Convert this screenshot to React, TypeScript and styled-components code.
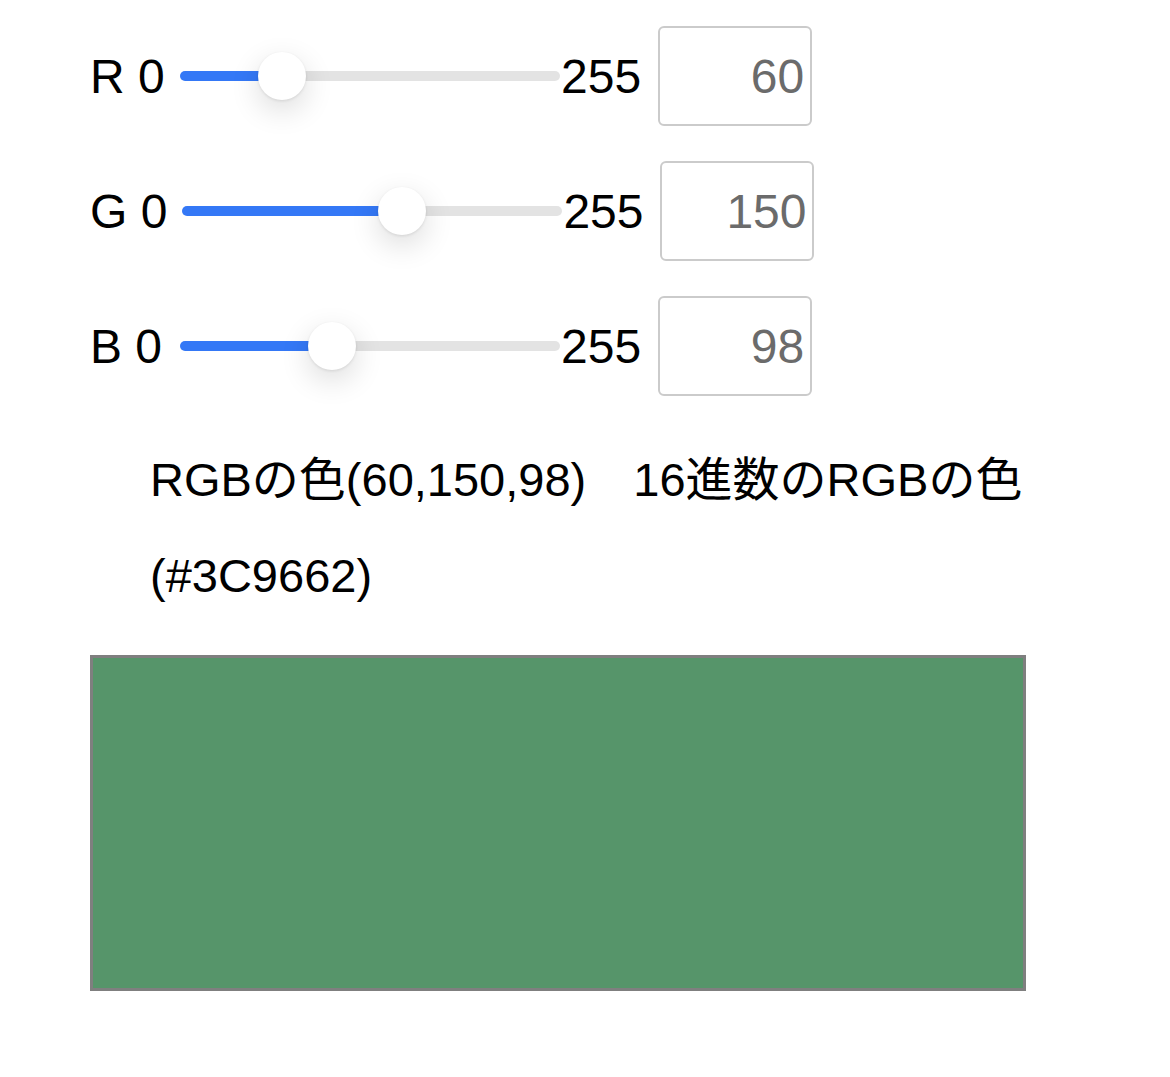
import React, { useState } from "react";
import styled, { createGlobalStyle } from "styled-components";

const GlobalStyle = createGlobalStyle`
  html, body { margin: 0; padding: 0; background: #ffffff; }
  body {
    font-family: "Liberation Sans", "Noto Sans CJK JP", Arial, sans-serif;
    color: #000000;
  }
`;

const Page = styled.div`
  display: flex;
  flex-direction: column;
  padding: 26px 0 0 90px;
  font-size: 48px;
`;

const Sliders = styled.div`
  display: flex;
  flex-direction: column;
  gap: 35px;
`;

const Row = styled.div`
  display: flex;
  align-items: center;
  height: 100px;
`;

const Label = styled.span`
  white-space: pre;
  min-width: 75px;
  margin-right: 15px;
`;

const Slider = styled.input`
  -webkit-appearance: none;
  appearance: none;
  width: 380px;
  height: 48px;
  margin: 0 1px 0 0;
  padding: 0;
  background: transparent;
  cursor: pointer;

  &::-webkit-slider-runnable-track {
    height: 10px;
    border-radius: 5px;
    background: linear-gradient(
      to right,
      #3478f6 0,
      #3478f6 var(--fill),
      #e3e3e3 var(--fill),
      #e3e3e3 100%
    );
  }

  &::-webkit-slider-thumb {
    -webkit-appearance: none;
    appearance: none;
    width: 48px;
    height: 48px;
    margin-top: -19px;
    border-radius: 50%;
    background: #ffffff;
    box-shadow: 0 10px 30px rgba(0, 0, 0, 0.14), 0 1px 3px rgba(0, 0, 0, 0.1);
  }

  &:focus { outline: none; }
`;

const Max = styled.span`
  margin-right: 17px;
`;

const NumberBox = styled.input`
  box-sizing: border-box;
  width: 154px;
  height: 100px;
  border: 2px solid #cbcbcb;
  border-radius: 6px;
  padding: 0 6px 0 0;
  margin: 0;
  text-align: right;
  font-family: "Liberation Sans", Arial, sans-serif;
  font-size: 48px;
  color: #6b6b6b;
  background: #ffffff;
  &:focus { outline: none; }
`;

const Result = styled.p`
  margin: 36px 0 0 60px;
  width: 920px;
  line-height: 96px;
  font-size: 47px;
`;

const Part = styled.span``;

const Swatch = styled.div`
  box-sizing: border-box;
  width: 936px;
  height: 336px;
  margin-top: 31px;
  border: 3px solid #7f7f7f;
`;

type Channel = "R" | "G" | "B";

const toHex = (n: number) => n.toString(16).toUpperCase().padStart(2, "0");

function ChannelRow({
  name,
  value,
  onChange,
}: {
  name: Channel;
  value: number;
  onChange: (v: number) => void;
}) {
  const fill = ((24 + (332 * value) / 255) / 380) * 100;
  return (
    <Row>
      <Label>{name} 0</Label>
      <Slider
        type="range"
        min={0}
        max={255}
        value={value}
        onChange={(e) => onChange(Number(e.target.value))}
        style={{ ["--fill" as any]: `${fill}%` }}
      />
      <Max>255</Max>
      <NumberBox
        type="text"
        value={value}
        onChange={(e) => {
          const n = Math.max(0, Math.min(255, Number(e.target.value) || 0));
          onChange(n);
        }}
      />
    </Row>
  );
}

export default function App() {
  const [r, setR] = useState(60);
  const [g, setG] = useState(150);
  const [b, setB] = useState(98);
  const hex = `#${toHex(r)}${toHex(g)}${toHex(b)}`;
  // swatch tone as it appears in the reference capture
  const shown = r === 60 && g === 150 && b === 98 ? "#56956a" : `rgb(${r},${g},${b})`;

  return (
    <>
      <GlobalStyle />
      <Page>
        <Sliders>
          <ChannelRow name="R" value={r} onChange={setR} />
          <ChannelRow name="G" value={g} onChange={setG} />
          <ChannelRow name="B" value={b} onChange={setB} />
        </Sliders>
        <Result>
          <Part>{`RGBの色(${r},${g},${b})`}</Part>
          <Part>{"　"}</Part>
          <Part>16進数のRGBの色</Part>
          <Part>{`(${hex})`}</Part>
        </Result>
        <Swatch style={{ background: shown }} />
      </Page>
    </>
  );
}
